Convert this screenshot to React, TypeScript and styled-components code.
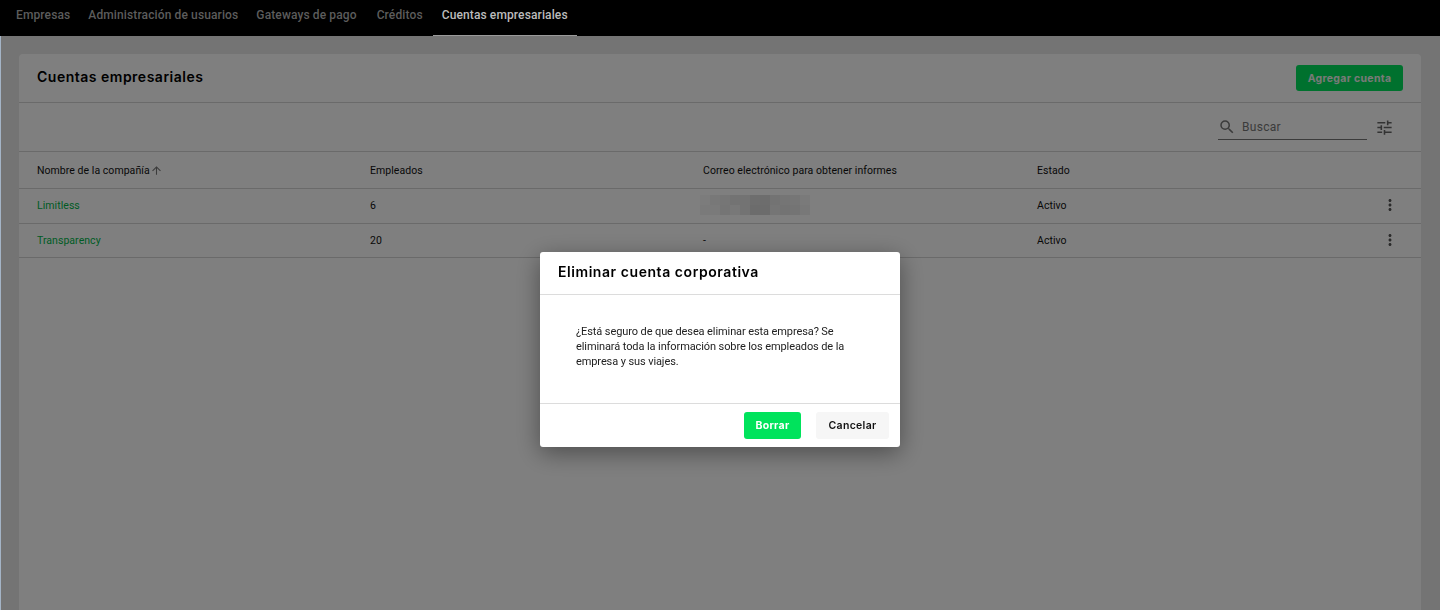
import React from "react";
import styled, { createGlobalStyle } from "styled-components";
import { MdSearch, MdTune, MdMoreVert, MdArrowUpward } from "react-icons/md";

const Global = createGlobalStyle`
  html, body { margin: 0; padding: 0; height: 100%; overflow: hidden; background: #a4b4c6; }
  body { font-family: Roboto, "Liberation Sans", sans-serif; }
  #root { height: 100%; }
`;

const Page = styled.div`
  height: 100%;
  display: flex;
  flex-direction: column;
`;

const Nav = styled.nav`
  position: relative;
  z-index: 20;
  flex: 0 0 36px;
  height: 36px;
  background: #000;
  display: flex;
  padding-left: 7px;
  box-sizing: border-box;
`;

const Tab = styled.a<{ $active?: boolean; $extra?: number }>`
  padding: 0 9px;
  margin-right: ${(p) => p.$extra ?? 0}px;
  height: 36px;
  box-sizing: border-box;
  line-height: 31px;
  font-size: 12px;
  font-weight: 500;
  letter-spacing: 0.12px;
  color: ${(p) => (p.$active ? "#bcbcbc" : "#5c5c5c")};
  border-bottom: 1px solid ${(p) => (p.$active ? "#9a9a9a" : "transparent")};
`;

const Main = styled.main`
  flex: 1;
  margin-left: 1px;
  background: #e8e8e8;
  padding: 18px 19px 0 18px;
  display: flex;
  min-height: 0;
`;

const Card = styled.section`
  flex: 1;
  background: #fff;
  border-radius: 4px 4px 0 0;
  display: flex;
  flex-direction: column;
`;

const CardHeader = styled.header`
  height: 48px;
  box-sizing: content-box;
  border-bottom: 1px solid #d4d4d4;
  display: flex;
  align-items: center;
  justify-content: space-between;
  padding: 0 18px;
`;

const CardTitle = styled.h1`
  margin: 0 0 3px;
  font-family: Inter, sans-serif;
  font-size: 14px;
  font-weight: 600;
  letter-spacing: 0.5px;
  color: #000;
`;

const PrimaryButton = styled.button`
  border: 0;
  border-radius: 3px;
  background: #00e35c;
  color: #fff;
  font-family: Inter, sans-serif;
  font-weight: 700;
  letter-spacing: 0.3px;
  font-size: 10.5px;
  padding: 0;
`;

const AddButton = styled(PrimaryButton)`
  width: 107px;
  height: 26px;
  color: #f0f4f0;
`;

const Toolbar = styled.div`
  height: 48px;
  border-bottom: 1px solid #d4d4d4;
  display: flex;
  align-items: center;
  justify-content: flex-end;
  padding-right: 27px;
  gap: 8px;
`;

const Search = styled.div`
  width: 149px;
  height: 24px;
  margin-top: 1px;
  box-sizing: content-box;
  border-bottom: 1px solid #777;
  display: flex;
  align-items: center;
  gap: 6px;
  color: #777;
  font-size: 12px;
  letter-spacing: 0.3px;
`;

const Row = styled.div<{ $head?: boolean }>`
  display: grid;
  grid-template-columns: 333px 333px 334px 1fr 42px;
  height: ${(p) => (p.$head ? "36px" : "32px")};
  padding: 0 0 ${(p) => (p.$head ? "0" : "2px")} 18px;
  border-bottom: 1px solid #d4d4d4;
  align-items: center;
  font-size: 10.5px;
  color: #111;
  letter-spacing: 0.05px;

  &:last-child {
    padding-bottom: 1px;
  }
`;

const HeadLabel = styled.span`
  display: inline-flex;
  align-items: center;
`;

const LinkCell = styled.a`
  color: #00b84a;
`;

const ActionCell = styled.span`
  display: flex;
  color: #555;
  font-size: 18px;
  padding-left: 2px;
`;

const Pixelated = styled.div`
  display: grid;
  grid-template-columns: repeat(11, 10px);
  grid-auto-rows: 10px;
  margin-left: -3px;
`;

const PixelCell = styled.i<{ $shade: string }>`
  background: ${(p) => p.$shade};
`;

const Overlay = styled.div`
  position: fixed;
  inset: 36px 0 0 1px;
  background: rgba(0, 0, 0, 0.5);
  z-index: 10;
`;

const Modal = styled.div`
  position: fixed;
  z-index: 30;
  left: 540px;
  top: 252px;
  width: 360px;
  height: 195px;
  background: #fff;
  border-radius: 3px;
  box-shadow: 0 6px 24px rgba(0, 0, 0, 0.4);
  display: flex;
  flex-direction: column;
`;

const ModalHeader = styled.div`
  border-bottom: 1px solid #dcdcdc;
  display: flex;
  align-items: center;
  padding: 0 0 4px 18px;
  box-sizing: border-box;
  flex: 0 0 43px;
`;

const ModalTitle = styled.h2`
  margin: 0;
  font-family: Inter, sans-serif;
  font-size: 14px;
  font-weight: 600;
  letter-spacing: 0.56px;
  color: #000;
`;

const ModalBody = styled.p`
  flex: 1;
  margin: 0;
  padding: 29px 50px 0 36px;
  font-size: 11px;
  line-height: 15.2px;
  color: #222;
  letter-spacing: -0.1px;
`;

const ModalFooter = styled.div`
  height: 43px;
  border-top: 1px solid #dcdcdc;
  display: flex;
  align-items: center;
  justify-content: flex-end;
  padding: 0 11px 0 0;
  gap: 15px;
`;

const DeleteButton = styled(PrimaryButton)`
  width: 57px;
  height: 27px;
`;

const CancelButton = styled.button`
  width: 73px;
  height: 27px;
  border: 0;
  border-radius: 3px;
  background: #f6f6f6;
  color: #111;
  font-family: Inter, sans-serif;
  font-weight: 600;
  font-size: 10.5px;
  letter-spacing: 0.3px;
  padding: 0;
`;

const shades = [
  "#f9f9f9","#f1f1f1","#ededed","#e6e6e6","#e6e6e6","#dcdcdc","#dadada","#e6e6e6","#ebebeb","#ececec","#f4f4f4",
  "#f4f4f4","#f4f4f4","#ebebeb","#f0f0f0","#e6e6e6","#d8d8d8","#d8d8d8","#ebebeb","#e6e6e6","#e8e8e8","#f0f0f0",
];

const rows = [
  { name: "Limitless", count: "6", masked: true },
  { name: "Transparency", count: "20", masked: false },
];

export default function App() {
  return (
    <Page>
      <Global />
      <Nav>
        <Tab>Empresas</Tab>
        <Tab>Administración de usuarios</Tab>
        <Tab $extra={2}>Gateways de pago</Tab>
        <Tab $extra={1}>Créditos</Tab>
        <Tab $active>Cuentas empresariales</Tab>
      </Nav>
      <Main>
        <Card>
          <CardHeader>
            <CardTitle>Cuentas empresariales</CardTitle>
            <AddButton>Agregar cuenta</AddButton>
          </CardHeader>
          <Toolbar>
            <Search>
              <MdSearch size={18} />
              Buscar
            </Search>
            <MdTune size={19} color="#666" />
          </Toolbar>
          <Row $head>
            <HeadLabel>
              Nombre de la compañía <MdArrowUpward size={13} color="#777" />
            </HeadLabel>
            <span>Empleados</span>
            <span>Correo electrónico para obtener informes</span>
            <span>Estado</span>
            <span />
          </Row>
          {rows.map((r) => (
            <Row key={r.name}>
              <LinkCell>{r.name}</LinkCell>
              <span>{r.count}</span>
              {r.masked ? (
                <Pixelated>
                  {shades.map((s, i) => (
                    <PixelCell key={i} $shade={s} />
                  ))}
                </Pixelated>
              ) : (
                <span>-</span>
              )}
              <span>Activo</span>
              <ActionCell>
                <MdMoreVert />
              </ActionCell>
            </Row>
          ))}
        </Card>
      </Main>
      <Overlay />
      <Modal>
        <ModalHeader>
          <ModalTitle>Eliminar cuenta corporativa</ModalTitle>
        </ModalHeader>
        <ModalBody>
          ¿Está seguro de que desea eliminar esta empresa? Se eliminará toda la información sobre los empleados de la
          empresa y sus viajes.
        </ModalBody>
        <ModalFooter>
          <DeleteButton>Borrar</DeleteButton>
          <CancelButton>Cancelar</CancelButton>
        </ModalFooter>
      </Modal>
    </Page>
  );
}
